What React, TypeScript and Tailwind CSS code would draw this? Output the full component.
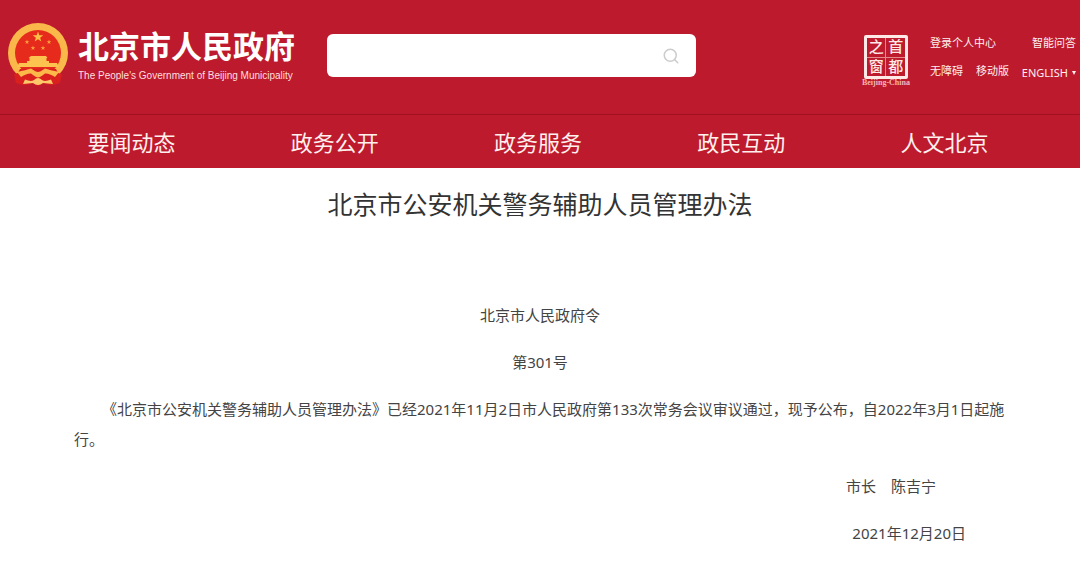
import React, { useState } from 'react';
import { Search } from 'lucide-react';

const navItems = ['要闻动态', '政务公开', '政务服务', '政民互动', '人文北京'];

const stars = [
  { x: 19, y: 20 },
  { x: 41, y: 20 },
  { x: 25, y: 26 },
  { x: 35, y: 26 },
];

const STAR = 'M0 -5 L1.2 -1.6 L4.8 -1.6 L1.9 .6 L3 4 L0 2 L-3 4 L-1.9 .6 L-4.8 -1.6 L-1.2 -1.6 Z';

function Emblem() {
  return (
    <svg viewBox="0 0 60 65" className="h-[65px] w-[60px] shrink-0" role="img" aria-label="国徽">
      <circle cx="30" cy="31" r="30" fill="#fbb84a" />
      <circle cx="30" cy="31" r="23" fill="#e62a1c" />
      <path d={STAR} transform="translate(30 15) scale(1.1)" fill="#fcc044" />
      {stars.map((s) => (
        <path key={`${s.x}-${s.y}`} d={STAR} transform={`translate(${s.x} ${s.y}) scale(.5)`} fill="#f9a03c" />
      ))}
      <path d="M23 34 H38 L39.5 36 H38.5 V39 H41 V41 H49 L51 45 H9 L11 41 H19 V39 H21.5 V36 H20.5 Z" fill="#fcc44e" />
      <path d="M12 47 Q30 46 48 47 L50 51 L54 52 L52 61 Q42 65 36 61 L30 64 L24 61 Q18 65 8 61 L6 52 L10 51 Z" fill="#d9201f" />
      <path d="M9 50 Q18 48 23 46.5 Q28 50 30 50 Q32 50 37 46.5 Q42 48 51 50 L47 55 Q41 51 37 51.5 Q32 55.5 30 55.5 Q28 55.5 23 51.5 Q19 51 13 55 Z" fill="#fcb94a" />
      <path d="M17 57.5 Q23 60 26 58 Q30 54 34 58 Q37 60 43 57.5 L45 62 L35 61 Q30 65 25 61 L15 62 Z" fill="#fcc86a" />
    </svg>
  );
}

function CapitalWindow() {
  return (
    <a href="#" className="flex flex-col items-center text-[#ffe9e6]">
      <span className="grid size-11 grid-cols-2 gap-px rounded-xs border-3 border-current bg-[#e58a8c] font-['Liberation_Serif','Noto_Sans_CJK_SC',serif] text-[15px]/4 font-medium">
        {['之', '首', '窗', '都'].map((char) => (
          <span key={char} className="flex items-center justify-center bg-[#bd1a2d]">{char}</span>
        ))}
      </span>
      <span className="font-['Liberation_Serif',serif] text-[8px]/2 font-bold text-[#f5b5b5]">Beijing-China</span>
    </a>
  );
}

function Header() {
  const [query, setQuery] = useState('');

  return (
    <header className="bg-[#bd1a2d] text-[#fff0ee]">
      <div className="flex h-[114px] items-start pl-2 pr-1">
        <a href="#" className="mt-[22px] flex shrink-0 gap-[10px]">
          <Emblem />
          <span className="mt-1 block w-[220px] whitespace-nowrap">
            <span className="block text-[31px]/10 font-bold text-white">北京市人民政府</span>
            <span className="block font-['Liberation_Sans',sans-serif] text-[10px]/5 text-[#ffdede]">
              The People's Government of Beijing Municipality
            </span>
          </span>
        </a>

        <form
          role="search"
          onSubmit={(e) => e.preventDefault()}
          className="mt-[34px] ml-[29px] mr-8 flex h-[43px] max-w-[369px] grow items-center rounded-md bg-white pr-4"
        >
          <input
            type="text"
            aria-label="搜索"
            value={query}
            onChange={(e) => setQuery(e.target.value)}
            className="h-full min-w-0 flex-1 px-3 text-base text-gray-700 outline-none"
          />
          <button type="submit" aria-label="提交搜索" className="text-[#cccccc]">
            <Search size={18} />
          </button>
        </form>

        <div className="mt-[35px] ml-auto flex shrink-0 gap-5">
          <CapitalWindow />
          <div className="flex w-[146px] flex-col gap-3 whitespace-nowrap text-[11px]/4">
            <div className="flex justify-between">
              <a href="#">登录个人中心</a>
              <a href="#">智能问答</a>
            </div>
            <div className="flex items-start justify-between">
              <a href="#">无障碍</a>
              <a href="#">移动版</a>
              <button type="button" className="flex items-center gap-1 pt-[2px]">
                ENGLISH
                <svg viewBox="0 0 4 4" className="size-1" fill="currentColor"><path d="M0 0 H4 L2 4 Z" /></svg>
              </button>
            </div>
          </div>
        </div>
      </div>

      <nav className="grid grid-cols-5 border-t border-[#a01122] pl-[30px] pr-[34px]">
        {navItems.map((item) => (
          <a key={item} href="#" className="pt-3 pb-[11px] text-center text-[22px]/[30px]">{item}</a>
        ))}
      </nav>
    </header>
  );
}

export default function App() {
  return (
    <div className="min-h-screen bg-white font-['Noto_Sans','Noto_Sans_CJK_SC',sans-serif]" lang="zh-CN">
      <Header />
      <main className="px-[74px] pt-4 pb-7 text-[15px]/[30px] text-[#444444]">
        <h1 className="text-center text-[25px]/10 text-[#333333]">北京市公安机关警务辅助人员管理办法</h1>
        <div className="mt-[76px] flex flex-col gap-[17px]">
          <p className="text-center">北京市人民政府令</p>
          <p className="text-center">第301号</p>
          <p className="indent-7">
            《北京市公安机关警务辅助人员管理办法》已经2021年11月2日市人民政府第133次常务会议审议通过，现予公布，自2022年3月1日起施行。
          </p>
          <p className="pr-[70px] text-right">市长　陈吉宁</p>
          <p className="pr-10 text-right">2021年12月20日</p>
        </div>
      </main>
    </div>
  );
}
